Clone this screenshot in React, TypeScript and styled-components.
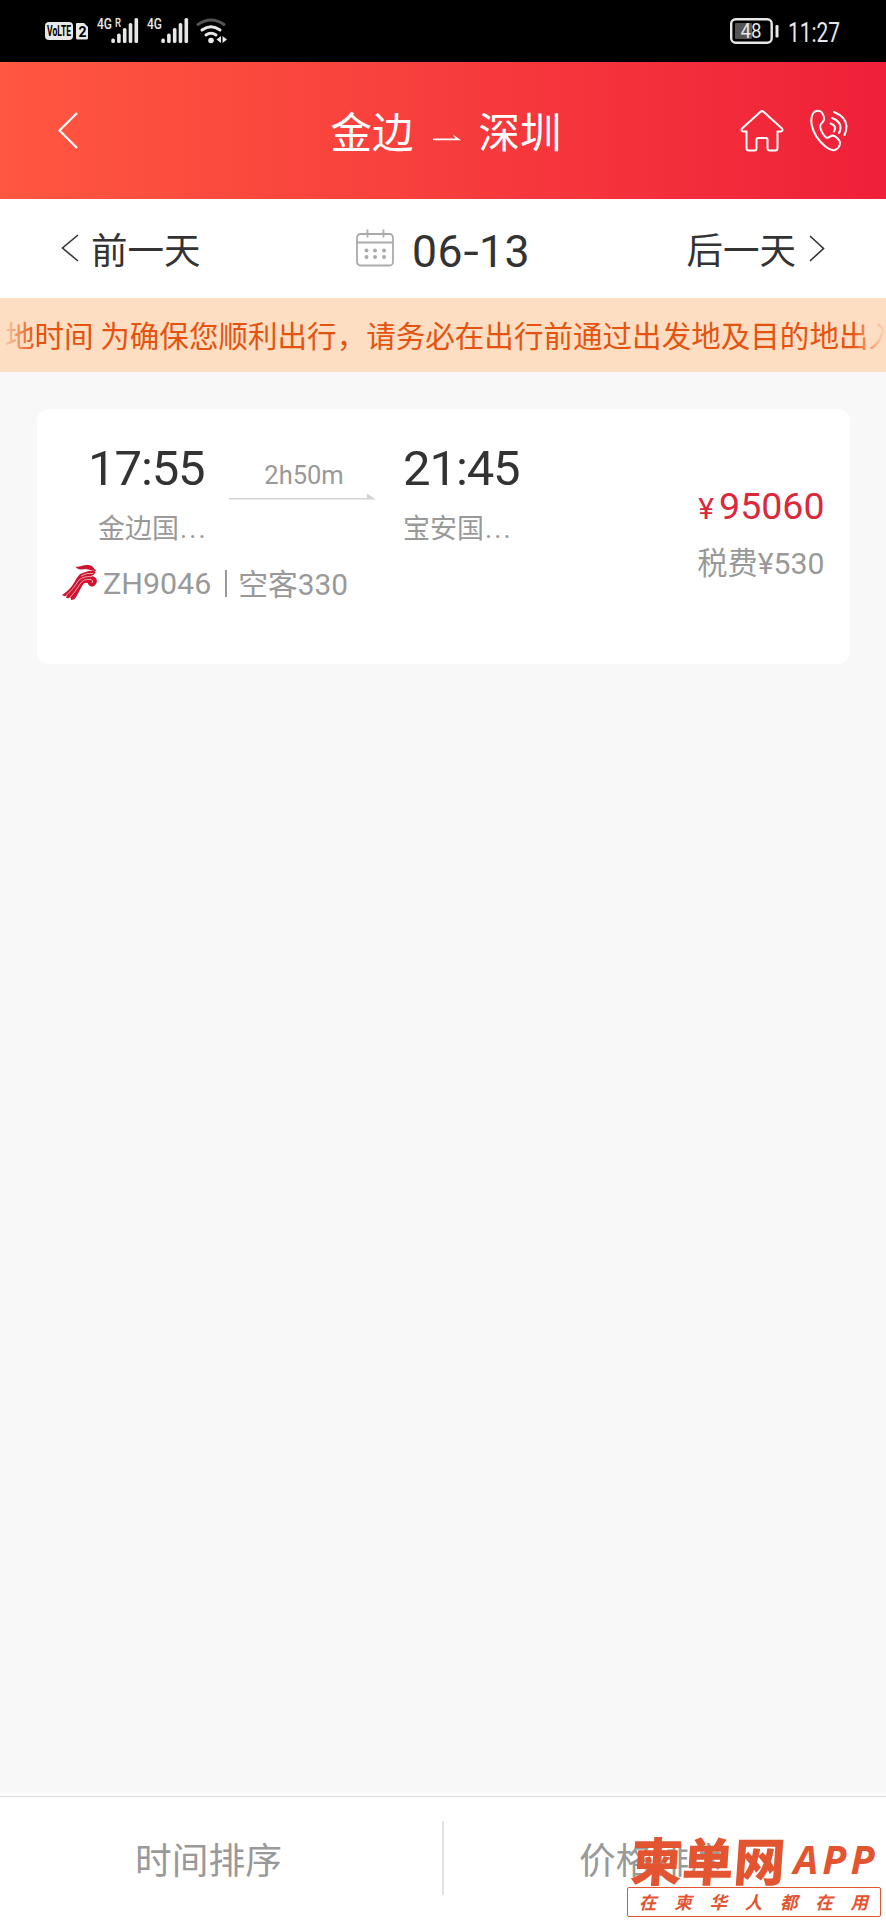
import React from "react";
import styled, { createGlobalStyle } from "styled-components";

const GlobalStyle = createGlobalStyle`
  * { box-sizing: border-box; }
  body {
    margin: 0;
    background: #f8f8f8;
    font-family: Roboto, "Noto Sans CJK SC", sans-serif;
    color: #333;
  }
`;

const Screen = styled.div`
  position: relative;
  display: flex;
  flex-direction: column;
  width: 886px;
  height: 1920px;
  overflow: hidden;
  background: #f8f8f8;
  white-space: nowrap;
`;

const StatusBar = styled.div`
  display: flex;
  justify-content: space-between;
  height: 62px;
  flex: none;
  background: #000;
`;

const Header = styled.header`
  display: grid;
  grid-template-columns: 1fr auto 1fr;
  align-items: center;
  height: 137px;
  flex: none;
  padding: 0 38px 0 58px;
  background: linear-gradient(90deg, #ff5740 0%, #f8403d 45%, #ef2039 100%);
  color: #fff;
`;

const Route = styled.h1`
  display: flex;
  align-items: center;
  margin: 0 14px 0 0;
  padding-top: 7px;
  font-size: 41.5px;
  line-height: 60px;
  font-weight: 400;
`;

const RouteArrow = styled.svg`
  width: 28px;
  height: 12px;
  margin: 7px 18px 0 19px;
`;

const HeaderActions = styled.div`
  display: flex;
  justify-content: flex-end;
  gap: 26px;
`;

const DateBar = styled.nav`
  display: flex;
  align-items: center;
  justify-content: space-between;
  height: 99px;
  flex: none;
  padding: 0 61px 1px 61px;
  background: #fff;
  font-size: 36.5px;
`;

const DayLink = styled.span<{ $gap: number }>`
  display: flex;
  align-items: center;
  gap: ${(p) => p.$gap}px;
  width: 200px;
  justify-content: ${(p) => (p.$gap > 12 ? "flex-end" : "flex-start")};
`;

const CurrentDate = styled.span`
  display: flex;
  align-items: center;
  gap: 18px;
  padding: 7px 0 0 0;
  font-size: 44.5px;
  letter-spacing: 0.4px;
`;

const Hyphen = styled.span`
  display: inline-block;
  margin: 0 1.5px 0 2px;
  transform: scaleX(1.25);
`;

const CalendarSvg = styled.svg`
  margin-top: -7px;
`;

const Notice = styled.div`
  position: relative;
  height: 74px;
  flex: none;
  padding-left: 5px;
  overflow: hidden;
  background: #fddec2;
  color: #e4530f;
  font-size: 29.55px;
  line-height: 74px;
  font-family: "Noto Sans CJK SC", sans-serif;
`;

const Fade = styled.span<{ $side: "left" | "right" }>`
  position: absolute;
  top: 0;
  bottom: 0;
  ${(p) => p.$side}: 0;
  width: 34px;
  background: linear-gradient(to ${(p) => p.$side}, rgba(253, 222, 194, 0), #fddec2);
`;

const Results = styled.main`
  flex: 1;
  padding: 37px 36.5px 0 37px;
`;

const FlightCard = styled.article`
  display: flex;
  justify-content: space-between;
  height: 255px;
  padding: 29px 25px 0 25px;
  border-radius: 12px;
  background: #fff;
`;

const Legs = styled.div`
  display: grid;
  grid-template-columns: 113px 146px auto;
  column-gap: 28px;
  padding-left: 26px;
`;

const Stop = styled.div`
  display: flex;
  flex-direction: column;
`;

const Clock = styled.span`
  font-size: 49px;
  line-height: 62px;
  letter-spacing: -1.1px;
`;

const Airport = styled.span<{ $indent?: number }>`
  padding: 3px 0 0 ${(p) => p.$indent ?? 0}px;
  font-size: 27px;
  line-height: 53px;
  color: #999;
`;

const Dots = styled.span`
  margin-left: 1px;
  letter-spacing: 2.1px;
`;

const Duration = styled.div`
  display: flex;
  flex-direction: column;
  align-items: center;
  padding: 20px 0 0 1px;
  font-size: 25.5px;
  line-height: 35px;
  color: #999;
`;

const DurationText = styled.span`
  margin-left: 3px;
`;

const FlightLine = styled.svg`
  width: 147px;
  height: 8px;
`;

const FlightInfo = styled.div`
  display: flex;
  align-items: center;
  height: 55px;
  font-size: 30.4px;
  color: #999;
`;

const AirlineLogo = styled.svg`
  width: 36px;
  height: 36px;
  margin: -2px 5px 0 0;
`;

const Separator = styled.i`
  width: 2px;
  height: 27px;
  margin: 0 11px 0 14px;
  background: #999;
`;

const Aircraft = styled.span`
  margin-top: -3px;
  font-size: 29.8px;
`;

const Price = styled.div`
  display: flex;
  flex-direction: column;
  align-items: flex-end;
  padding-top: 43px;
`;

const Fare = styled.span`
  color: #d9293a;
  font-size: 37.5px;
  line-height: 50px;
`;

const Currency = styled.span`
  margin-right: 5px;
  font-size: 30px;
`;

const Tax = styled.span`
  color: #999;
  font-size: 30.2px;
  line-height: 59px;
`;

const SortBar = styled.footer`
  display: flex;
  align-items: center;
  height: 127px;
  flex: none;
  border-top: 3px solid #fcfcfc;
  box-shadow: inset 0 1px 0 #dcdcdc;
  background: #fff;
`;

const SortOption = styled.span`
  flex: 1;
  padding: 0 25px 1px 0;
  text-align: center;
  font-size: 36.7px;
  color: #999;
`;

const SortDivider = styled.i`
  width: 2px;
  height: 74px;
  background: #e3e3e3;
`;

const Watermark = styled.div`
  position: absolute;
  right: 5px;
  bottom: 3px;
  width: 254px;
  color: #e35431;
`;

const Brand = styled.div`
  display: flex;
  align-items: center;
  height: 55px;
  padding-left: 4px;
`;

const BrandName = styled.span`
  margin-top: -2px;
  font: 900 51.5px/55px "Noto Sans CJK SC", sans-serif;
  transform: skewX(-4deg);
`;

const BrandSuffix = styled.span`
  margin: -1px 0 0 8px;
  font: italic 700 39.5px/40px "Open Sans", sans-serif;
  letter-spacing: 4px;
`;

const Slogan = styled.div`
  display: flex;
  justify-content: space-between;
  height: 30px;
  padding: 0 12px 0 11px;
  border: 1px solid #e35431;
  border-radius: 2px;
  font: italic 700 17.5px/28px "Noto Sans CJK SC", sans-serif;
`;

function Chevron({ w, h, flip, stroke }: { w: number; h: number; flip?: boolean; stroke: number }) {
  const points = flip ? `1,1 ${w - 1.5},${h / 2} 1,${h - 1}` : `${w - 1},1 1.5,${h / 2} ${w - 1},${h - 1}`;
  return (
    <svg width={w} height={h} fill="none" stroke="currentColor" strokeWidth={stroke}>
      <polyline points={points} />
    </svg>
  );
}

function SignalBars({ x }: { x: number }) {
  return (
    <g fill="#e8e8e8">
      {[4.5, 9.5, 15, 20, 25].map((h, i) => (
        <rect key={h} x={x + i * 5.8} y={43 - h} width="3.6" height={h} rx="1.6" />
      ))}
    </g>
  );
}

function StatusLeft() {
  return (
    <svg width="240" height="62" fontFamily="Roboto, sans-serif" fill="#e8e8e8">
      <rect x="45" y="22" width="28" height="18" rx="4" />
      <text x="47" y="36" fontSize="14" fontWeight="700" fill="#000" textLength="24" lengthAdjust="spacingAndGlyphs">VoLTE</text>
      <path d="M76 24q0-1 1-1h7l4 4v11q0 1.500-1.500 1.500h-9q-1.500 0-1.500-1.500z" />
      <text x="78.500" y="36.500" fontSize="14" fontWeight="700" fill="#000">2</text>
      <text x="97" y="29" fontSize="15" fontWeight="500" textLength="15" lengthAdjust="spacingAndGlyphs">4G</text>
      <text x="115" y="27" fontSize="12" fontWeight="500" textLength="6" lengthAdjust="spacingAndGlyphs">R</text>
      <SignalBars x={111.3} />
      <text x="147" y="29" fontSize="15" fontWeight="500" textLength="15" lengthAdjust="spacingAndGlyphs">4G</text>
      <SignalBars x={161.3} />
      <g fill="none" strokeWidth="3" strokeLinecap="round">
        <path d="M198 24.500q13-9 26 0" stroke="#555" />
        <path d="M202 30q9-6.500 18 0" stroke="#e8e8e8" />
        <path d="M206 35q5-3.500 10 0" stroke="#e8e8e8" />
      </g>
      <circle cx="211" cy="40.500" r="2.800" />
      <path d="M221 36v7l-4.500-3.500zM222.500 36v7l4.500-3.500z" />
    </svg>
  );
}

function StatusRight() {
  return (
    <svg width="160" height="62" fontFamily="Roboto, sans-serif" fill="#e8e8e8">
      <rect x="5.200" y="19.200" width="40.500" height="23.500" rx="4.500" fill="none" stroke="#e8e8e8" strokeWidth="2.400" />
      <rect x="9" y="23" width="17" height="16" rx="1" fill="#555" />
      <text x="14.500" y="38" fontSize="21" textLength="21" lengthAdjust="spacingAndGlyphs">48</text>
      <rect x="49.500" y="25" width="3" height="12.500" rx="1.200" />
      <text x="62" y="41.500" fontSize="28.500" textLength="52" lengthAdjust="spacingAndGlyphs">11:27</text>
    </svg>
  );
}

function HomeIcon() {
  return (
    <svg width="44" height="44" viewBox="0 0 44 44" fill="none" stroke="#fff" strokeWidth="2" strokeLinejoin="round">
      <path d="M20.500 2.700Q22 1.500 23.500 2.700L42 19.500Q43.500 22 40.500 22.500H37.500V39Q37.500 41.500 35 41.500H29.500Q27.500 41.500 27.500 39V30.500Q27.500 29 26 29H18Q16.500 29 16.500 30.500V39Q16.500 41.500 14.500 41.500H9Q6.500 41.500 6.500 39V22.500H3.500Q0.500 22 2 19.500Z" />
    </svg>
  );
}

function PhoneIcon() {
  return (
    <svg width="38" height="44" viewBox="0 0 38 44" fill="none" stroke="#fff" strokeWidth="2" strokeLinecap="round" strokeLinejoin="round">
      <path d="M5 2.500Q8 1 11.500 3Q14.500 7 14 10.500Q13.500 13 11 15Q9.500 17 11 21Q13 26 16 28.500Q18 29.500 20 27.500Q23 25.500 26 28Q30 31 30 34.500Q29.500 39 25 41Q21 42 16 38Q4 28.500 1.500 15Q0.500 5.500 5 2.500Z" />
      <path d="M24 3Q36 8 36.500 17Q36.500 22 34.500 26M22 9Q30 12 30.500 18Q30.500 21.500 29 24M20.500 14.500Q25 16 25 19Q25 21 24 22.500" />
    </svg>
  );
}

function CalendarIcon() {
  return (
    <CalendarSvg width="38" height="38" fill="none" stroke="#aaa" strokeWidth="1.800">
      <rect x="1" y="5" width="36" height="31.500" rx="3.500" />
      <path d="M1 13.500H37M11.500 .5V8.500M27.500 .5V8.500" />
      <g fill="#aaa" stroke="none">
        {[21.5, 28].map((y) => [10.500, 19, 28].map((x) => <circle key={`${x}-${y}`} cx={x} cy={y} r="2" />))}
      </g>
    </CalendarSvg>
  );
}

function ShenzhenAirlines() {
  return (
    <AirlineLogo viewBox="0 0 36 36" fill="#cf1430">
      <path d="M13.500 1.500Q18 2 21 .5Q27-1 30.500 1.500L34.500 6.500L30 5.500Q24 3 20 4.500Q15.500 5 13.500 1.500Z" />
      <path d="M34 7Q30 5 25 6.500L18 9Q15 12 12.500 17Q8 25 0 30Q2.500 32 5 30.500L4 33Q7 33.500 8.500 32.500L9 35Q13 35 15 30.500L20 21Q22 17 25.500 18Q28 23 32 21Q36 18 34.500 14Q32.500 11 29 11Q32 10 34 7Z" />
      <g fill="none" stroke="#fff" strokeWidth=".6">
        <path d="M3.500 31Q12 24 16.500 15.500Q21 11 30 11.500" />
        <path d="M7 33.500Q14 26 18 19Q21 13.500 29 14.500Q32 15.500 30 18" />
        <path d="M19 11Q25 7.500 31 8.500" />
      </g>
    </AirlineLogo>
  );
}

export default function App() {
  return (
    <Screen>
      <GlobalStyle />
      <StatusBar>
        <StatusLeft />
        <StatusRight />
      </StatusBar>
      <Header>
        <Chevron w={20} h={37} stroke={2.2} />
        <Route>
          金边
          <RouteArrow fill="#fff">
            <path d="M0 8.200H28L20 2.500L22.500 6.400H0Z" />
          </RouteArrow>
          深圳
        </Route>
        <HeaderActions>
          <HomeIcon />
          <PhoneIcon />
        </HeaderActions>
      </Header>
      <DateBar>
        <DayLink $gap={12}>
          <Chevron w={18} h={28} stroke={1.6} />
          前一天
        </DayLink>
        <CurrentDate>
          <CalendarIcon />
          <span>06<Hyphen>-</Hyphen>13</span>
        </CurrentDate>
        <DayLink $gap={13}>
          后一天
          <Chevron w={16} h={27} stroke={1.6} flip />
        </DayLink>
      </DateBar>
      <Notice>
        地时间 为确保您顺利出行，请务必在出行前通过出发地及目的地出入
        <Fade $side="left" />
        <Fade $side="right" />
      </Notice>
      <Results>
        <FlightCard>
          <div>
            <Legs>
              <Stop>
                <Clock>17:55</Clock>
                <Airport $indent={10}>金边国<Dots>...</Dots></Airport>
              </Stop>
              <Duration>
                <DurationText>2h50m</DurationText>
                <FlightLine fill="#d4d4d4">
                  <path d="M0 5H138L138 .5L147 6.500H0Z" />
                </FlightLine>
              </Duration>
              <Stop>
                <Clock>21:45</Clock>
                <Airport>宝安国<Dots>...</Dots></Airport>
              </Stop>
            </Legs>
            <FlightInfo>
              <ShenzhenAirlines />
              ZH9046
              <Separator />
              <Aircraft>空客330</Aircraft>
            </FlightInfo>
          </div>
          <Price>
            <Fare><Currency>¥</Currency>95060</Fare>
            <Tax>税费¥530</Tax>
          </Price>
        </FlightCard>
      </Results>
      <SortBar>
        <SortOption>时间排序</SortOption>
        <SortDivider />
        <SortOption>价格排序</SortOption>
      </SortBar>
      <Watermark>
        <Brand>
          <BrandName>柬单网</BrandName>
          <BrandSuffix>APP</BrandSuffix>
        </Brand>
        <Slogan>
          {[..."在柬华人都在用"].map((char, i) => (
            <span key={i}>{char}</span>
          ))}
        </Slogan>
      </Watermark>
    </Screen>
  );
}
